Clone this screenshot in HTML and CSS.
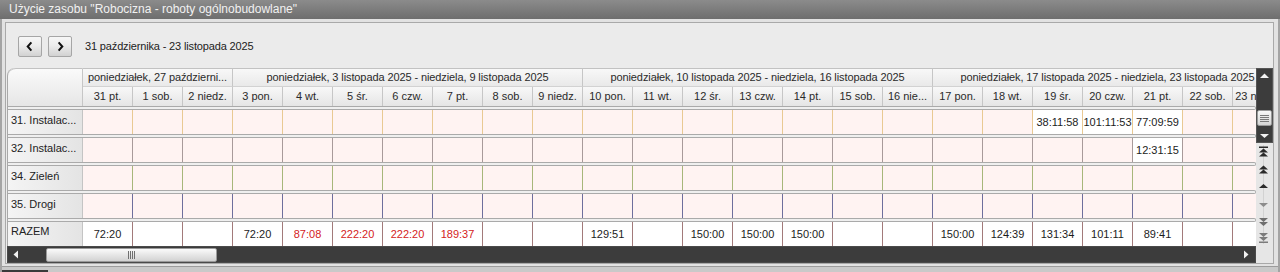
FILE: index.html
```html
<!DOCTYPE html>
<html lang="pl">
<head>
<meta charset="utf-8">
<title>Użycie zasobu</title>
<link rel="stylesheet" href="styles.css">
</head>
<body>
<div class="window">
  <div class="titlebar">Użycie zasobu "Robocizna - roboty ogólnobudowlane"</div>
  <div class="panel">
    <div class="toolbar">
      <button class="navbtn" aria-label="Poprzedni"><svg width="24" height="21" viewBox="0 0 24 21"><path d="M13.5 6 L9.5 10.5 L13.5 15" fill="none" stroke="#111" stroke-width="2.2"/></svg></button>
      <button class="navbtn" aria-label="Następny"><svg width="24" height="21" viewBox="0 0 24 21"><path d="M10.5 6 L14.5 10.5 L10.5 15" fill="none" stroke="#111" stroke-width="2.2"/></svg></button>
      <span class="range">31 października - 23 listopada 2025</span>
    </div>
    <div class="gridarea">
      <div class="grid">
        <div class="head">
          <div class="corner"></div>
          <div class="headcols">
            <div class="weeks">
              <div class="wk w3">poniedziałek, 27 październi...</div>
              <div class="wk w7">poniedziałek, 3 listopada 2025 - niedziela, 9 listopada 2025</div>
              <div class="wk w7">poniedziałek, 10 listopada 2025 - niedziela, 16 listopada 2025</div>
              <div class="wk w7">poniedziałek, 17 listopada 2025 - niedziela, 23 listopada 2025</div>
            </div>
            <div class="days">
              <div class="d">31 pt.</div><div class="d">1 sob.</div><div class="d">2 niedz.</div><div class="d">3 pon.</div><div class="d">4 wt.</div><div class="d">5 śr.</div><div class="d">6 czw.</div><div class="d">7 pt.</div><div class="d">8 sob.</div><div class="d">9 niedz.</div><div class="d">10 pon.</div><div class="d">11 wt.</div><div class="d">12 śr.</div><div class="d">13 czw.</div><div class="d">14 pt.</div><div class="d">15 sob.</div><div class="d">16 nie...</div><div class="d">17 pon.</div><div class="d">18 wt.</div><div class="d">19 śr.</div><div class="d">20 czw.</div><div class="d">21 pt.</div><div class="d">22 sob.</div><div class="d">23 niedz.</div>
            </div>
          </div>
        </div>
        <div class="band"></div>
        <div class="row r31">
          <div class="lbl">31. Instalac...</div>
          <div class="c"></div><div class="c"></div><div class="c"></div><div class="c"></div><div class="c"></div><div class="c"></div><div class="c"></div><div class="c"></div><div class="c"></div><div class="c"></div><div class="c"></div><div class="c"></div><div class="c"></div><div class="c"></div><div class="c"></div><div class="c"></div><div class="c"></div><div class="c"></div><div class="c"></div><div class="c v">38:11:58</div><div class="c v">101:11:53</div><div class="c v">77:09:59</div><div class="c"></div><div class="c"></div>
        </div>
        <div class="band"></div>
        <div class="row r32">
          <div class="lbl">32. Instalac...</div>
          <div class="c"></div><div class="c"></div><div class="c"></div><div class="c"></div><div class="c"></div><div class="c"></div><div class="c"></div><div class="c"></div><div class="c"></div><div class="c"></div><div class="c"></div><div class="c"></div><div class="c"></div><div class="c"></div><div class="c"></div><div class="c"></div><div class="c"></div><div class="c"></div><div class="c"></div><div class="c"></div><div class="c"></div><div class="c v">12:31:15</div><div class="c"></div><div class="c"></div>
        </div>
        <div class="band"></div>
        <div class="row r34">
          <div class="lbl">34. Zieleń</div>
          <div class="c"></div><div class="c"></div><div class="c"></div><div class="c"></div><div class="c"></div><div class="c"></div><div class="c"></div><div class="c"></div><div class="c"></div><div class="c"></div><div class="c"></div><div class="c"></div><div class="c"></div><div class="c"></div><div class="c"></div><div class="c"></div><div class="c"></div><div class="c"></div><div class="c"></div><div class="c"></div><div class="c"></div><div class="c"></div><div class="c"></div><div class="c"></div>
        </div>
        <div class="band"></div>
        <div class="row r35">
          <div class="lbl">35. Drogi</div>
          <div class="c"></div><div class="c"></div><div class="c"></div><div class="c"></div><div class="c"></div><div class="c"></div><div class="c"></div><div class="c"></div><div class="c"></div><div class="c"></div><div class="c"></div><div class="c"></div><div class="c"></div><div class="c"></div><div class="c"></div><div class="c"></div><div class="c"></div><div class="c"></div><div class="c"></div><div class="c"></div><div class="c"></div><div class="c"></div><div class="c"></div><div class="c"></div>
        </div>
        <div class="band"></div>
        <div class="row total">
          <div class="lbl">RAZEM</div>
          <div class="c">72:20</div><div class="c"></div><div class="c"></div><div class="c">72:20</div><div class="c red">87:08</div><div class="c red">222:20</div><div class="c red">222:20</div><div class="c red">189:37</div><div class="c"></div><div class="c"></div><div class="c">129:51</div><div class="c"></div><div class="c">150:00</div><div class="c">150:00</div><div class="c">150:00</div><div class="c"></div><div class="c"></div><div class="c">150:00</div><div class="c">124:39</div><div class="c">131:34</div><div class="c">101:11</div><div class="c">89:41</div><div class="c"></div><div class="c"></div>
        </div>
      </div>
      <div class="vscroll">
        <div class="vs-dark">
          <div class="vs-up"><svg width="17" height="14" viewBox="0 0 17 14"><polygon points="8.5,4.5 4,9 13,9" fill="#f2f2f2"/></svg></div>
          <div class="vs-track"></div>
          <div class="vs-thumb"><span></span><span></span><span></span><span></span></div>
          <div class="vs-down"><svg width="17" height="17" viewBox="0 0 17 17"><polygon points="4,8 13,8 8.5,12" fill="#f2f2f2"/></svg></div>
        </div>
        <div class="vs-nav">
          <svg width="17" height="103" viewBox="0 0 17 103">
            <line x1="8.5" y1="2" x2="8.5" y2="101" stroke="#d2d2d2" stroke-width="1"/>
            <rect x="4" y="3.5" width="9" height="1.5" fill="#2a2a2a"/>
            <polygon points="8.5,5.5 4,9.5 13,9.5" fill="#2a2a2a"/>
            <polygon points="8.5,9.5 4,13.5 13,13.5" fill="#2a2a2a"/>
            <polygon points="8.5,22.5 4,26.5 13,26.5" fill="#2a2a2a"/>
            <polygon points="8.5,26.5 4,30.5 13,30.5" fill="#2a2a2a"/>
            <polygon points="8.5,41 4,45 13,45" fill="#2a2a2a"/>
            <polygon points="4,60 13,60 8.5,64" fill="#8c8c8c"/>
            <polygon points="4,75 13,75 8.5,79" fill="#6e6e6e"/>
            <polygon points="4,79 13,79 8.5,83" fill="#6e6e6e"/>
            <polygon points="4,90 13,90 8.5,94" fill="#7c7c7c"/>
            <polygon points="4,94 13,94 8.5,98" fill="#7c7c7c"/>
            <rect x="4" y="98.5" width="9" height="1.5" fill="#7c7c7c"/>
          </svg>
        </div>
      </div>
    </div>
    <div class="hscrollrow">
      <div class="hscroll">
        <div class="hs-left"><svg width="12" height="17" viewBox="0 0 12 17"><polygon points="4.5,8.5 9,4.5 9,12.5" fill="#f2f2f2"/></svg></div>
        <div class="hs-thumb"><span></span><span></span><span></span><span></span></div>
        <div class="hs-fill"></div>
        <div class="hs-right"><svg width="12" height="17" viewBox="0 0 12 17"><polygon points="3,4.5 7.5,8.5 3,12.5" fill="#f2f2f2"/></svg></div>
      </div>
      <div class="hs-corner"></div>
    </div>
  </div>
  <div class="bottom"><div class="bottom-dark"></div></div>
</div>
</body>
</html>
```

FILE: styles.css
```css
* { box-sizing: border-box; }
html, body { margin: 0; padding: 0; }
body {
  width: 1280px;
  height: 272px;
  overflow: hidden;
  background: #d9d9d9;
  font-family: "Liberation Sans", Arial, sans-serif;
  font-size: 11px;
  color: #222;
}
.window {
  width: 1280px;
  height: 272px;
  display: flex;
  flex-direction: column;
  background: #e2e2e2;
  border-left: 2px solid #a4a4a4;
  border-right: 2px solid #a4a4a4;
}
.titlebar {
  height: 19px;
  margin: 0 -2px;
  padding-left: 9px;
  line-height: 19px;
  font-size: 12px;
  color: #f1f1f1;
  background: linear-gradient(#8b8b8b, #6e6e6e);
  white-space: nowrap;
}
.panel {
  margin: 3px 4px 0 3px;
  height: 242px;
  border: 1px solid #a9a9a9;
  background: #ebebeb;
  padding-left: 1px;
  display: flex;
  flex-direction: column;
}
.toolbar {
  height: 45px;
  flex: none;
  display: flex;
  align-items: flex-start;
  padding: 13px 0 0 11px;
}
.navbtn {
  width: 24px;
  height: 21px;
  padding: 0;
  margin: 0 6px 0 0;
  border: 1px solid #a6a6a6;
  border-radius: 2px;
  background: linear-gradient(#f7f7f7 0%, #ececec 45%, #d2d2d2 100%);
  display: flex;
  align-items: center;
  justify-content: center;
}
.navbtn svg { display: block; }
.range {
  margin-left: 7px;
  line-height: 21px;
  font-size: 11px;
  letter-spacing: -0.15px;
  color: #222;
  white-space: nowrap;
}
.gridarea {
  height: 178px;
  flex: none;
  display: flex;
}
.grid {
  width: 1249px;
  height: 178px;
  overflow: hidden;
  border-left: 1px solid #a8a8a8;
  border-top-left-radius: 8px;
  background: #ebebeb;
}
.head {
  display: flex;
  height: 38px;
  width: 1300px;
}
.corner {
  width: 75px;
  flex: none;
  border-top: 1px solid #c2c2c2;
  border-right: 1px solid #c6c6c6;
  border-top-left-radius: 8px;
  background: linear-gradient(#fafafa, #e6e6e6);
}
.headcols {
  display: flex;
  flex-direction: column;
}
.weeks, .days { display: flex; }
.wk {
  height: 19px;
  flex: none;
  border-top: 1px solid #c2c2c2;
  border-right: 1px solid #c6c6c6;
  border-bottom: 1px solid #d2d2d2;
  background: linear-gradient(#f8f8f8, #e9e9e9);
  text-align: center;
  line-height: 17px;
  letter-spacing: -0.1px;
  white-space: nowrap;
  overflow: hidden;
  color: #2a2a2a;
}
.w3 { width: 150px; }
.w7 { width: 350px; }
.d {
  width: 50px;
  height: 19px;
  flex: none;
  border-right: 1px solid #c6c6c6;
  background: linear-gradient(#f8f8f8, #e5e5e5);
  text-align: center;
  line-height: 19px;
  white-space: nowrap;
  overflow: hidden;
  color: #2a2a2a;
}
.band {
  width: 1248px;
  height: 4px;
  border: 1px solid #aaaaaa;
  border-left: none;
  border-radius: 0 2px 2px 0;
  background: #efefef;
}
.row {
  display: flex;
  height: 24px;
  width: 1300px;
}
.lbl {
  width: 75px;
  flex: none;
  padding: 2px 0 0 3px;
  line-height: 17px;
  border-right: 1px solid #c4c4c4;
  background: linear-gradient(to right, #f4f4f4, #e4e4e4);
  white-space: nowrap;
  overflow: hidden;
  color: #222;
}
.c {
  width: 50px;
  flex: none;
  height: 24px;
  border-right: 1px solid #ccc;
  background: #fff3f2;
  text-align: center;
  line-height: 24px;
  white-space: nowrap;
  color: #1c1c1c;
}
.c.v { background: #fff; }
.r31 .c { border-right-color: #e9c993; }
.r32 .c { border-right-color: #a89a9a; }
.r34 .c { border-right-color: #a7b67a; }
.r35 .c { border-right-color: #6e6e9c; }
.total .c { border-right-color: #a27a7a; background: #fff; }
.total .c.red { color: #d42222; }
.total .lbl { padding-top: 1px; line-height: 17px; }
.vscroll {
  width: 17px;
  flex: none;
  display: flex;
  flex-direction: column;
}
.vs-dark {
  height: 75px;
  background: #3c3c3c;
  border: 1px solid #555;
  display: flex;
  flex-direction: column;
}
.vs-up { height: 13px; }
.vs-up svg, .vs-down svg, .vs-nav svg { display: block; margin-left: -1px; }
.vs-track { height: 28px; }
.vs-thumb {
  height: 16px;
  border: 1px solid #999;
  border-radius: 2px;
  background: linear-gradient(#f8f8f8, #d4d4d4);
  display: flex;
  flex-direction: column;
  align-items: center;
  justify-content: center;
  gap: 1px;
}
.vs-thumb span {
  display: block;
  width: 9px;
  height: 1px;
  background: #7a7a7a;
}
.vs-down { height: 16px; }
.vs-nav {
  height: 103px;
  background: #e6e6e6;
}
.hscrollrow {
  height: 17px;
  flex: none;
  display: flex;
}
.hscroll {
  width: 1249px;
  height: 17px;
  background: #3c3c3c;
  border: 1px solid #4a4a4a;
  display: flex;
  align-items: stretch;
}
.hs-left { width: 38px; flex: none; }
.hs-left svg, .hs-right svg { display: block; margin-top: -1px; }
.hs-left svg { margin-left: 1px; }
.hs-thumb {
  width: 171px;
  flex: none;
  margin: 1px 0 0;
  border: 1px solid #9a9a9a;
  border-radius: 2px;
  background: linear-gradient(#fafafa, #d2d2d2);
  display: flex;
  align-items: center;
  justify-content: center;
  gap: 1px;
}
.hs-thumb span {
  display: block;
  width: 1px;
  height: 8px;
  background: #707070;
}
.hs-fill { flex: 1; }
.hs-right { width: 14px; flex: none; }
.hs-corner {
  width: 17px;
  flex: none;
  background: #e6e6e6;
}
.bottom {
  flex: 1;
  margin-top: 2px;
  border-top: 1px solid #9c9c9c;
  background: #c9c9c9;
}
.bottom-dark {
  width: 46px;
  height: 3px;
  margin-top: 3px;
  background: #3a3a3a;
}
```
